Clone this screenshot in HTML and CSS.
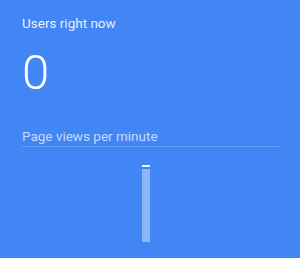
FILE: index.html
```html
<!DOCTYPE html>
<html>
  <head>
    <title>Realtime</title>
    <link rel="stylesheet" href="styles.css">
  </head>
  <body>
    <div class="card">
      <h2 class="title">Users right now</h2>
      <div class="count">0</div>
      <div class="subtitle">Page views per minute</div>
      <div class="chart">
        <div class="bar">
          <div class="cap"></div>
          <div class="fill"></div>
        </div>
      </div>
    </div>
  </body>
</html>
```

FILE: styles.css
```css
body {
  margin: 0;
  background: #4285f4;
  font-family: Roboto, sans-serif;
}

.card {
  height: 258px;
  padding: 0 19px 0 22px;
  color: white;
  overflow: hidden;
}

.title {
  margin: 0;
  padding-top: 15px;
  font-size: 13.5px;
  font-weight: 400;
  line-height: 16px;
  color: rgba(255, 255, 255, 0.9);
}

.count {
  margin-top: 17px;
  font-size: 49px;
  font-weight: 300;
  line-height: 50px;
}

.subtitle {
  margin-top: 30px;
  padding-bottom: 2px;
  font-size: 13.5px;
  line-height: 16px;
  color: rgba(255, 255, 255, 0.7);
  border-bottom: 1px solid rgba(255, 255, 255, 0.2);
}

.chart {
  display: flex;
  padding-left: 120px;
  padding-top: 18px;
}

.bar {
  width: 8px;
}

.cap {
  height: 2px;
  background: rgba(255, 255, 255, 0.9);
}

.fill {
  margin-top: 2px;
  height: 73px;
  background: rgba(255, 255, 255, 0.4);
}
```
